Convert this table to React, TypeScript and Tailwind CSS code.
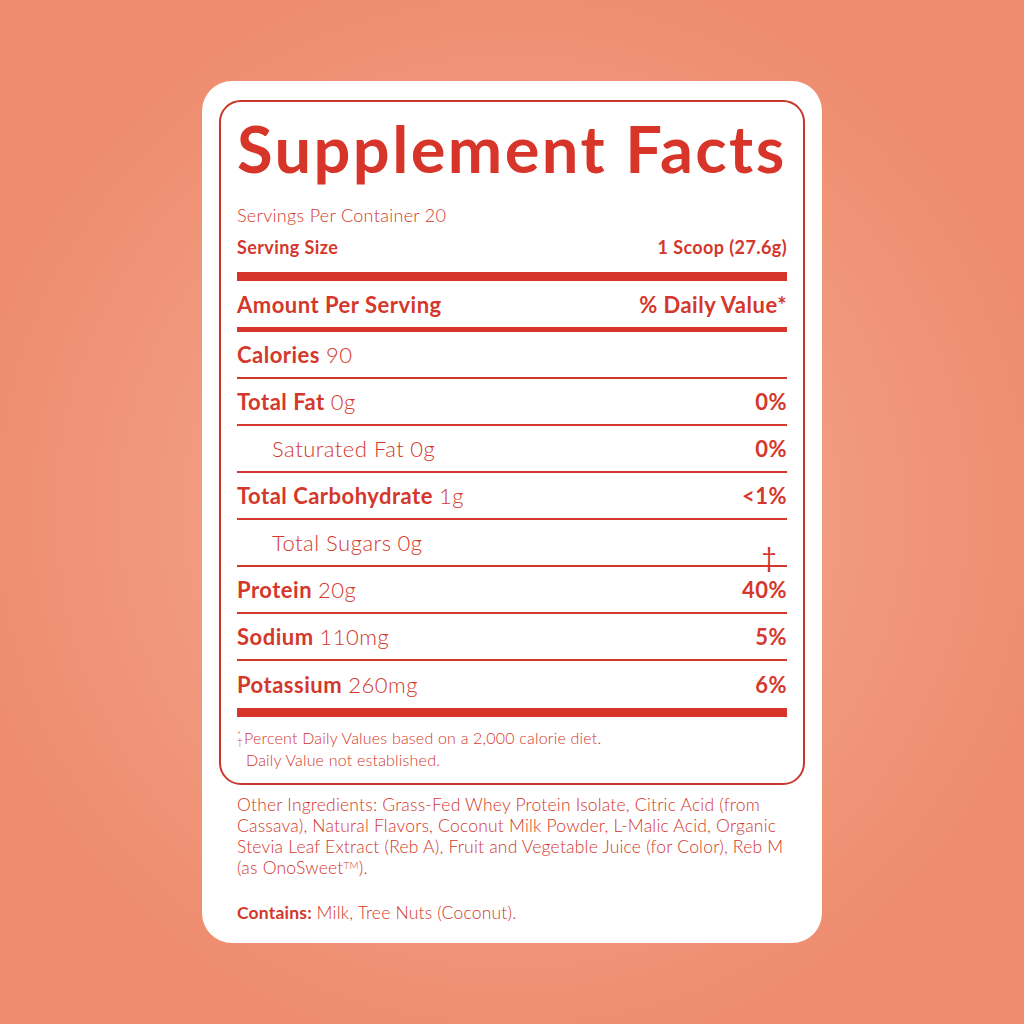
const RED = "text-[#d4372b]";

type Row = { label: string; amount: string; dv?: string; sub?: boolean; dagger?: boolean };

const ROWS: Row[] = [
  { label: "Total Fat", amount: "0g", dv: "0%" },
  { label: "Saturated Fat", amount: "0g", dv: "0%", sub: true },
  { label: "Total Carbohydrate", amount: "1g", dv: "<1%" },
  { label: "Total Sugars", amount: "0g", sub: true, dagger: true },
  { label: "Protein", amount: "20g", dv: "40%" },
  { label: "Sodium", amount: "110mg", dv: "5%" },
  { label: "Potassium", amount: "260mg", dv: "6%" },
];

export default function App() {
  return (
    <div
      className={`flex h-[1024px] w-[1024px] items-center justify-center bg-[radial-gradient(circle_at_center,#f5ae94_0%,#f19a7e_45%,#ee8a6d_80%)] font-['Lato',sans-serif] ${RED}`}
    >
      <div className="flex h-[862px] w-[620px] flex-col rounded-[30px] bg-white px-[17px] pt-[19px]">
        <div className="rounded-[22px] border-2 border-[#c9372c] px-[16px] pb-[12px]">
          <h1 className="mt-[10px] h-[72px] text-[65px] leading-[72px] font-bold tracking-[2.4px] whitespace-nowrap text-[#d8352a]">
            Supplement Facts
          </h1>
          <p className="mt-[19px] text-[18px] leading-[24px] font-light tracking-[0.3px]">Servings Per Container 20</p>
          <div className="mt-[8px] flex justify-between text-[18px] leading-[24px] font-bold tracking-[0.4px]">
            <span>Serving Size</span>
            <span>1 Scoop (27.6g)</span>
          </div>
          <div className="mt-[13px] h-[9px] bg-[#d8352a]" />
          <div className="flex h-[46px] items-center justify-between text-[22px] font-bold tracking-[0.5px]">
            <span>Amount Per Serving</span>
            <span>% Daily Value*</span>
          </div>
          <div className="h-[5px] bg-[#d8352a]" />
          <div className="flex h-[47px] items-center border-b-2 border-[#d4372b] text-[22px] tracking-[0.5px]">
            <span className="font-bold">Calories</span>
            <span className="ml-[6px] font-light">90</span>
          </div>
          {ROWS.map((r, i) => (
            <div
              key={r.label}
              className={`relative flex h-[47px] items-center justify-between text-[22px] tracking-[0.5px] ${
                i < ROWS.length - 1 ? "border-b-2 border-[#d4372b]" : ""
              }`}
            >
              <span className={r.sub ? "pl-[35px]" : ""}>
                <span className={r.sub ? "font-light" : "font-bold"}>{r.label}</span>
                <span className="ml-[6px] font-light">{r.amount}</span>
              </span>
              {r.dv && <span className="font-bold">{r.dv}</span>}
              {r.dagger && (
                <span className="absolute right-[10px] bottom-[-5px] text-[26px] leading-none font-normal text-[#d4372b]">
                  †
                </span>
              )}
            </div>
          ))}
          <div className="h-[9px] bg-[#d8352a]" />
          <div className="mt-[10px] flex items-start text-[16px] leading-[22px] font-light tracking-[0.2px]">
            <span className="mt-[4px] mr-[1px] flex flex-col text-[10px] leading-[7px]">
              <span>*</span>
              <span>†</span>
            </span>
            <span>Percent Daily Values based on a 2,000 calorie diet.</span>
          </div>
          <p className="pl-[9px] text-[16px] leading-[22px] font-light tracking-[0.2px]">Daily Value not established.</p>
        </div>
        <div className="px-[18px] pt-[9px] text-[17.5px] leading-[21px] tracking-[0.2px]">
          <p className="font-light whitespace-nowrap">
            Other Ingredients: Grass-Fed Whey Protein Isolate, Citric Acid (from
            <br />
            Cassava), Natural Flavors, Coconut Milk Powder, L-Malic Acid, Organic
            <br />
            Stevia Leaf Extract (Reb A), Fruit and Vegetable Juice (for Color), Reb M
            <br />
            (as OnoSweet<sup className="text-[10px]">TM</sup>).
          </p>
          <p className="mt-[24px]">
            <span className="font-bold">Contains:</span> <span className="font-light">Milk, Tree Nuts (Coconut).</span>
          </p>
        </div>
      </div>
    </div>
  );
}
